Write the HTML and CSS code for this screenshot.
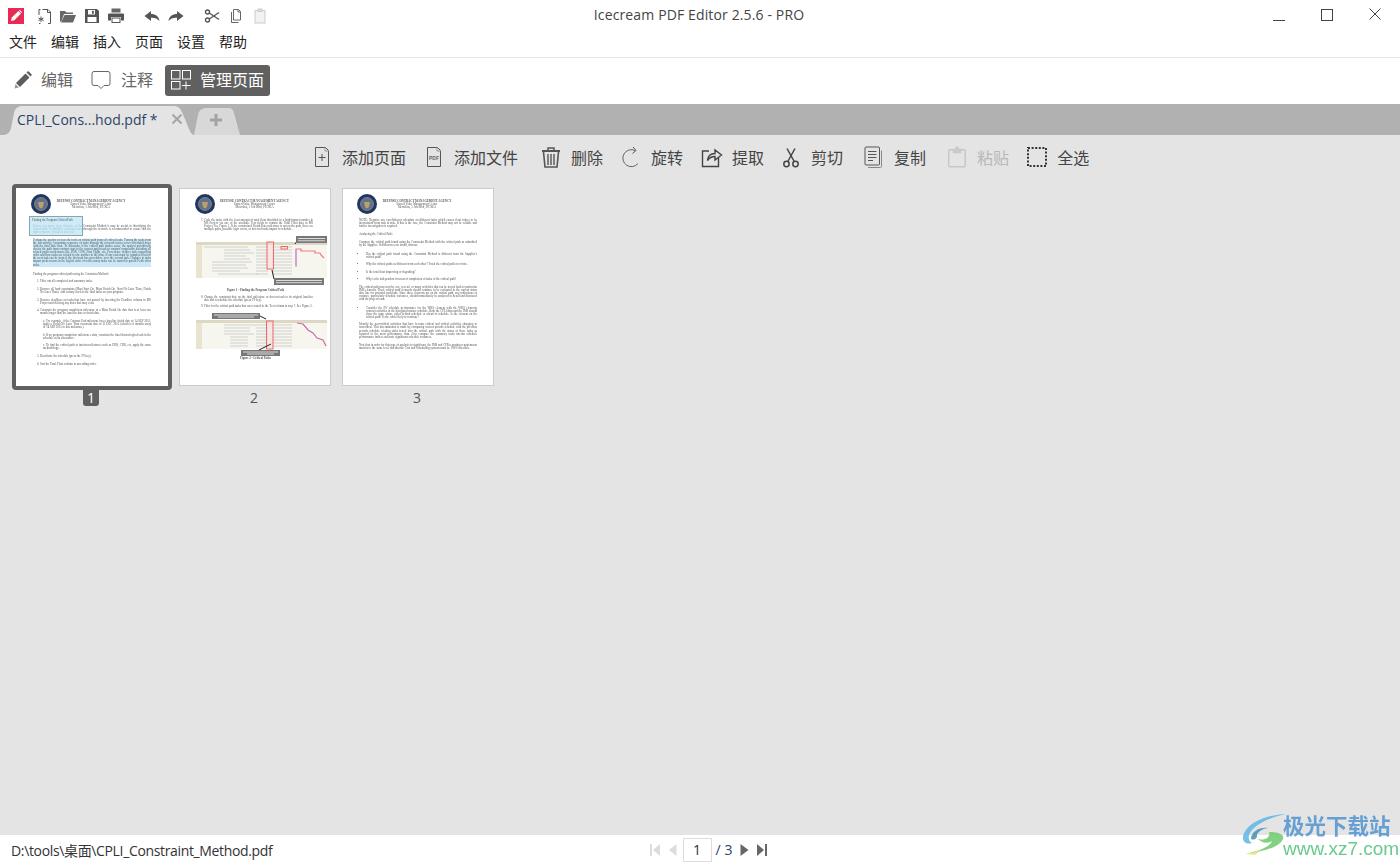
FILE: index.html

```html
<!DOCTYPE html>
<html>
<head>
    <title>Icecream PDF Editor</title>
    <link rel="stylesheet" href="styles.css">
</head>
<body>
    <div class="titlebar">
        <div class="quick">
            <svg class="qi" viewBox="0 0 16 16"><rect width="16" height="16" fill="#e72b52"/><path d="M3 13l.8-3.400 6.600-6.600 2.600 2.600-6.600 6.600z" fill="#fff"/><path d="M11 2.400l.8-.6 2.400 2.400-.6.8z" fill="#fff"/></svg>
            <svg class="qi first" viewBox="0 0 16 16" fill="none" stroke="#555"><path d="M6.500 1.500h5.500l2.500 2.500v11.500h-2.500"/><path d="M3 7V1.500h1.500M3 15.500h1.500"/><path d="M11.500 1.500v3h3"/><path d="M5 8.500v5.500M2.500 10l5 2.500M7.500 10l-5 2.500"/></svg>
            <svg class="qi" viewBox="0 0 16 16"><path d="M0 14V3h5l1.500 1.500H13V6H4L1.500 13z" fill="#666"/><path d="M1 14.500L4.500 7H16l-3 7.500z" fill="#666"/></svg>
            <svg class="qi" viewBox="0 0 16 16"><path d="M1 1h12l2 2v12H1z" fill="#555"/><rect x="4" y="2" width="7" height="4.500" fill="#fff"/><rect x="8" y="2.800" width="1.800" height="3" fill="#555"/><rect x="3.500" y="9" width="9" height="5" fill="#fff"/></svg>
            <svg class="qi" viewBox="0 0 16 16"><rect x="3.500" y="0.500" width="9" height="4" fill="#666"/><path d="M0 6.500q0-1 1-1h14q1 0 1 1v6h-3V9H3v3.500H0z" fill="#555"/><rect x="4" y="10" width="8" height="4.500" fill="none" stroke="#555"/></svg>
            <svg class="qi group" viewBox="0 0 16 16"><path d="M7 3L0.500 8 7 13V9.700c3.500-.3 6.500.8 8.500 3.300C15 8.500 11.500 6 7 6z" fill="#555"/></svg>
            <svg class="qi" viewBox="0 0 16 16"><path d="M9 3l6.500 5L9 13V9.700c-3.500-.3-6.500.8-8.500 3.300C1 8.500 4.500 6 9 6z" fill="#555"/></svg>
            <svg class="qi group" viewBox="0 0 16 16" fill="none" stroke="#555" stroke-width="1.400"><circle cx="3.500" cy="4" r="2"/><circle cx="3.500" cy="12" r="2"/><path d="M5.200 5L15 11.500M5.200 11L15 4.500"/></svg>
            <svg class="qi" viewBox="0 0 16 16" fill="none" stroke="#666"><path d="M5.500 1.500h5l2 2V12h-7zM3.500 4v10.500h7"/><path d="M10 1.500v2.500h2.500"/></svg>
            <svg class="qi" viewBox="0 0 16 16" fill="none" stroke="#ccc"><rect x="3" y="2.500" width="10" height="12.500" fill="#f2f2f2"/><rect x="6" y="1" width="4" height="2.500" fill="#ddd"/></svg>
        </div>
        <div class="app-title">Icecream PDF Editor 2.5.6 - PRO</div>
        <div class="win-btns">
            <div class="win-btn"><svg width="14" height="14" viewBox="0 0 14 14"><path d="M1 13.500h12" stroke="#444"/></svg></div>
            <div class="win-btn"><svg width="14" height="14" viewBox="0 0 14 14"><rect x="1.500" y="2.500" width="11" height="11" fill="none" stroke="#444"/></svg></div>
            <div class="win-btn"><svg width="14" height="14" viewBox="0 0 14 14"><path d="M1.500 1.500l11 11M12.500 1.500l-11 11" stroke="#444"/></svg></div>
        </div>
    </div>

    <div class="menubar">
        <span>文件</span>
        <span>编辑</span>
        <span>插入</span>
        <span>页面</span>
        <span>设置</span>
        <span>帮助</span>
    </div>

    <div class="modes">
        <div class="mode">
            <svg width="18" height="18" viewBox="0 0 18 18"><path d="M2 12l9.500-9.500 4 4L6 16z" fill="#5c5c5c"/><path d="M12.500 1.500l1-1q.7-.4 1.300 0l2.700 2.700q.4.600 0 1.300l-1 1z" fill="#5c5c5c"/><path d="M1.500 13l3.500 3.500-4.500 1z" fill="#999"/></svg>
            <span>编辑</span>
        </div>
        <div class="mode note-mode">
            <svg width="20" height="20" viewBox="0 0 20 20" fill="none" stroke="#666"><path d="M3 1.500h14q2 0 2 2v10q0 2-2 2h-4l-3 3-3-3H3q-2 0-2-2v-10q0-2 2-2z"/></svg>
            <span>注释</span>
        </div>
        <div class="mode active">
            <svg width="20" height="20" viewBox="0 0 20 20" fill="none" stroke="#fff"><rect x="0.500" y="0.500" width="8.500" height="8.500"/><rect x="11.500" y="0.500" width="8" height="8.500"/><rect x="0.500" y="11.500" width="8.500" height="7.500"/><path d="M15 11.500v8M11 15.500h8.500"/></svg>
            <span>管理页面</span>
        </div>
    </div>

    <div class="tabstrip">
        <div class="tab">
            <span class="tab-name">CPLI_Cons...hod.pdf *</span>
            <svg class="tab-x" width="12" height="12" viewBox="0 0 12 12"><path d="M1.500 1.500l9 9M10.500 1.500l-9 9" stroke="#a5a5a5" stroke-width="2"/></svg>
        </div>
        <div class="tab-add">
            <svg width="14" height="14" viewBox="0 0 14 14"><path d="M7 1v12M1 7h12" stroke="#a2a2a2" stroke-width="3"/></svg>
        </div>
    </div>

    <div class="workspace">
        <div class="actions">
            <div class="act">
                <svg class="ai" viewBox="0 0 22 22" fill="none" stroke="#555"><path d="M4.500 1.500h10l3 3v16h-13z"/><path d="M14 1.500v3.500h3.500" stroke="#999"/><path d="M11 8v7M7.500 11.500h7"/></svg>
                <span>添加页面</span>
            </div>
            <div class="act">
                <svg class="ai" viewBox="0 0 22 22" fill="none" stroke="#555"><path d="M4.500 1.500h10l3 3v16h-13z"/><path d="M14 1.500v3.500h3.500" stroke="#999"/><text class="pdf-mark" x="11" y="13.500" text-anchor="middle">PDF</text></svg>
                <span>添加文件</span>
            </div>
            <div class="act">
                <svg class="ai" viewBox="0 0 22 22" fill="none" stroke="#555"><path d="M2 5h18" stroke-width="2"/><path d="M8 4.500V2h6v2.500" stroke-width="1.500"/><path d="M3.500 6l1.500 15h12l1.500-15" stroke-width="1.600"/><path d="M8 8v11M11 8v11M14 8v11" stroke-width="1.400"/></svg>
                <span>删除</span>
            </div>
            <div class="act">
                <svg class="ai" viewBox="0 0 22 22" fill="none" stroke="#666"><path d="M15 4.500A8.500 8.500 0 1 0 18 17.500"/><path d="M13 1l3 3.500-3.500 3" stroke="#555"/></svg>
                <span>旋转</span>
            </div>
            <div class="act">
                <svg class="ai" viewBox="0 0 22 22" fill="none" stroke="#444"><path d="M8 5H1.500v15.500h16V12" stroke-width="1.400"/><path d="M6.500 14.500C7 9.500 10 7.500 14 7.500V4l6.500 5-6.500 5v-3.500c-3 0-5.500 1-7.500 4z" stroke-width="1.400"/></svg>
                <span>提取</span>
            </div>
            <div class="act">
                <svg class="ai" viewBox="0 0 22 22" fill="none" stroke="#444" stroke-width="1.500"><circle cx="6.500" cy="18" r="2.700"/><circle cx="15.500" cy="18" r="2.700"/><path d="M7.800 15.500L15 2.500M14.200 15.500L7 2.500"/></svg>
                <span>剪切</span>
            </div>
            <div class="act">
                <svg class="ai" viewBox="0 0 22 22" fill="none" stroke="#555"><path d="M3 1h12.500q1 0 1 1v16q0 1-1 1H3q-1 0-1-1V2q0-1 1-1z"/><path d="M18.500 4.500v16q0 1-1 1H5" stroke="#888"/><path d="M5 5.500h8.500M5 8.500h8.500M5 11.500h8.500M5 14.500h5"/></svg>
                <span>复制</span>
            </div>
            <div class="act off">
                <svg class="ai" viewBox="0 0 22 22" fill="none" stroke="#c8c8c8" stroke-width="1.500"><rect x="2.700" y="3.700" width="16.500" height="17" rx="1"/><path d="M7.500 3.500h2.500V1.500h2V3.500h2.500v3h-7z" fill="#ccc"/></svg>
                <span>粘贴</span>
            </div>
            <div class="act">
                <svg class="ai" viewBox="0 0 22 22" fill="none" stroke="#333" stroke-width="2" stroke-dasharray="2 1.600"><rect x="2" y="2" width="18" height="18"/></svg>
                <span>全选</span>
            </div>
        </div>

        <div class="thumbs">
            <div class="thumb selected">
                <div class="frame">
                    <div class="page">
                        <div class="doc-head">
                            <svg class="seal" viewBox="0 0 20 20"><circle cx="10" cy="10" r="10" fill="#1f3763"/><circle cx="10" cy="10" r="6.500" fill="#5d7096" stroke="#b5a25a" stroke-width=".6"/><path d="M7 8h6l-1 5-2 1.500L8 13z" fill="#c0a060"/></svg>
                            <div class="doc-org">
                                <b>DEFENSE CONTRACT MANAGEMENT AGENCY</b><br>
                                Earned Value Management Center<br>
                                Metrolina, 1 Job Blvd, PICSEA
                            </div>
                        </div>
                        <div class="note">Finding the Program Critical Path</div>
                        <p class="doc-p pull">Before you many steps illustrate in the Constraint Method it may be useful in identifying the critical path. In addition, a manual trace through the network is recommended to ensure that the right sequence of tasks is selected.</p>
                        <p class="doc-p marked">Perhaps the analyst reviews the tools on critical path from all critical tasks. Tracing the tasks from the last activity, constraints sequence of tasks through the network between two scheduled dates with the final task float. To determine if the critical path makes sense, the analyst periodically checks the path from contract start to the current major task to contract completion including all related project milestones like PDR, CDR, First Flight, etc. Precedence defines task sequencing order and how tasks are related to one another in the plan. If one task must be completed before the next task can be started, the first task has precedence over the second task. Changes in tasks impact predecessors in the logical order of work; many tasks can be started in parallel with other tasks.</p>
                        <p class="doc-p">Finding the program critical path using the Constraint Method:</p>
                        <ol class="doc-list">
                            <li>Filter out all completed and summary tasks.</li>
                            <li>Remove all hard constraints (Must Start On, Must Finish On, Start No Later Than, Finish No Later Than). Add tertiary slack to the final tasks on your program.</li>
                            <li>Remove deadlines on tasks that have not passed by inserting the Deadline column in MS Project and deleting any dates that may exist.</li>
                            <li>Constrain the program completion milestone at a Must Finish On date that is at least one month longer than the baseline date to finish date.</li>
                        </ol>
                        <ul class="doc-sub">
                            <li>a. For example, if the Contract End milestone has a baseline finish date of 14 SEP 2015, apply a Finish No Later Than constraint date of 31 DEC 2015 (which is 6 months away or 14 SEP 2015 in this milestone).</li>
                            <li>b. If no program completion milestone exists, constrain the final chronological task in the schedule as an alternative.</li>
                            <li>c. To find the critical path to interim milestones such as PDR, CDR, etc, apply the same methodology.</li>
                        </ul>
                        <ol class="doc-list" start="5">
                            <li>Reactivate the schedule (press the F9 key).</li>
                            <li>Sort the Total Float column in ascending order.</li>
                        </ol>
                    </div>
                </div>
                <div class="num">1</div>
            </div>

            <div class="thumb">
                <div class="frame">
                    <div class="page">
                        <div class="doc-head">
                            <svg class="seal" viewBox="0 0 20 20"><circle cx="10" cy="10" r="10" fill="#1f3763"/><circle cx="10" cy="10" r="6.500" fill="#5d7096" stroke="#b5a25a" stroke-width=".6"/><path d="M7 8h6l-1 5-2 1.500L8 13z" fill="#c0a060"/></svg>
                            <div class="doc-org">
                                <b>DEFENSE CONTRACT MANAGEMENT AGENCY</b><br>
                                Earned Value Management Center<br>
                                Metrolina, 1 Job Blvd, PICSEA
                            </div>
                        </div>
                        <ol class="doc-list" start="7">
                            <li>Code the tasks with the least amount of total float identified in a high-impact number in MS Project via one of the available Text fields to contain the Total Float data in MS Project. See Figure 1. If the constrained Finish Date milestone is not on the path, there are multiple paths, possible logic errors, or deferred tasks impact to schedule.</li>
                        </ol>
                        <svg class="doc-fig" width="131" height="50" viewBox="0 0 131 50">
                            <rect x="0" y="6" width="131" height="36" fill="#f6f6ee"/>
                            <rect x="0" y="6" width="131" height="3" fill="#ddd8c4"/>
                            <rect x="0" y="9" width="6" height="33" fill="#e8e4d0"/>
                            <path d="M8 11h44M28 14h26M28 17h30M28 20h22M28 23h26M16 26h40M16 29h34M16 32h36M16 35h28M22 38h40M60 11h12M60 14h12M60 17h12M60 20h12M60 23h12M60 26h12M60 29h12M60 32h12M60 35h12M60 38h12M76 11h20M76 14h20M76 17h20M76 20h20M76 23h20M76 26h20M76 29h20M76 32h20M76 35h20M76 38h20" stroke="#cfcfcf"/>
                            <rect x="71" y="6" width="6.500" height="27" fill="#f8d8d8" fill-opacity=".5" stroke="#ee6a6a"/>
                            <rect x="85" y="10.500" width="6.500" height="2.500" fill="none" stroke="#ee6a6a"/>
                            <path d="M100 30V13h5v2h14v2h5l1 2 3 3" fill="none" stroke="#ee7a8a" stroke-width="1.200"/>
                            <path d="M100 14v17" stroke="#a9a0e8"/>
                            <path d="M99 8l3-4" stroke="#222"/>
                            <rect x="100" y="0" width="31" height="7" fill="#777"/>
                            <path d="M102 2.500h27M102 4.800h27" stroke="#ddd"/>
                            <path d="M76 34l2 9" stroke="#222"/>
                            <rect x="78" y="42" width="50" height="7" fill="#777"/>
                            <path d="M80 44.500h46M80 46.700h46" stroke="#ddd"/>
                        </svg>
                        <p class="doc-cap">Figure 1 - Finding the Program Critical Path</p>
                        <ol class="doc-list tight" start="8">
                            <li>Change the constraint date on the final milestone or descent task to its original baseline date and reschedule the schedule (press F9 key).</li>
                            <li>Filter for the critical path tasks that was created in the Text column in step 7. See Figure 2.</li>
                        </ol>
                        <svg class="doc-fig" width="131" height="45" viewBox="0 0 131 45">
                            <rect x="0" y="8" width="131" height="29" fill="#f6f6ee"/>
                            <rect x="0" y="8" width="131" height="3" fill="#ddd8c4"/>
                            <rect x="0" y="11" width="6" height="26" fill="#e8e4d0"/>
                            <path d="M28 13h32M28 16h26M28 19h26M28 22h30M34 25h18M34 28h18M34 31h18M34 34h18M60 13h12M60 16h12M60 19h12M60 22h12M60 25h12M60 28h12M60 31h12M60 34h12M76 13h20M76 16h20M76 19h20M76 22h20M76 25h20M76 28h20M76 31h20M76 34h20" stroke="#cfcfcf"/>
                            <rect x="70.500" y="9" width="6.500" height="28" fill="#f8d8d8" fill-opacity=".5" stroke="#ee6a6a"/>
                            <path d="M101 11l6 1 5 6 5 3 4 5 6 2 3 6" fill="none" stroke="#cc6aa8" stroke-width="1.200"/>
                            <rect x="16" y="1" width="48" height="6" fill="#777"/>
                            <path d="M18 3h44M22 5h36" stroke="#ddd"/>
                            <path d="M64 4l6 3M63 38l12-6" stroke="#222"/>
                            <rect x="45" y="38" width="39" height="6" fill="#777"/>
                            <path d="M47 40h35M51 42h27" stroke="#ddd"/>
                        </svg>
                        <p class="doc-cap under">Figure 2 - Critical Paths</p>
                    </div>
                </div>
                <div class="num">2</div>
            </div>

            <div class="thumb">
                <div class="frame">
                    <div class="page">
                        <div class="doc-head">
                            <svg class="seal" viewBox="0 0 20 20"><circle cx="10" cy="10" r="10" fill="#1f3763"/><circle cx="10" cy="10" r="6.500" fill="#5d7096" stroke="#b5a25a" stroke-width=".6"/><path d="M7 8h6l-1 5-2 1.500L8 13z" fill="#c0a060"/></svg>
                            <div class="doc-org">
                                <b>DEFENSE CONTRACT MANAGEMENT AGENCY</b><br>
                                Earned Value Management Center<br>
                                Metrolina, 1 Job Blvd, PICSEA
                            </div>
                        </div>
                        <p class="doc-p">NOTE: Negative one can different calendars on different tasks which causes float values to be inconsistent from task to task. If this is the case, the Constraint Method may not be reliable and further investigation is required.</p>
                        <p class="doc-p">Analyzing the Critical Path:</p>
                        <p class="doc-p">Compare the critical path found using the Constraint Method with the critical path as submitted by the Supplier. If differences are found, discuss:</p>
                        <ul class="doc-bullets">
                            <li>Has the critical path found using the Constraint Method is different from the Supplier's critical path?</li>
                            <li>Why the critical paths as different from each other? Track the critical path over time.</li>
                            <li>Is the total float improving or degrading?</li>
                            <li>Why is the independent forecast of completion of tasks of the critical path?</li>
                        </ul>
                        <p class="doc-p">The critical path may involve one, several, or many activities that can be traced back to particular IMS elements. These critical path elements should continue to be evaluated in the current status date line for potential problems. Since these elements are on the critical path, any indications of variance, particularly schedule variances, should immediately be analyzed in detail and discussed with the project team.</p>
                        <ul class="doc-bullets">
                            <li>Consider the EV schedule performance for the WBS element with the WBS elements contract activities in the Integrated master schedule. Both the CPLI data and the IMS should show the same status, either behind schedule or ahead of schedule. Is the element on the critical path? Is the work likely to continue?</li>
                        </ul>
                        <p class="doc-p">Identify the near-critical activities that have become critical and critical activities changing to noncritical. This determination is made by comparing current periods schedule with the previous periods schedule relating tasks tested into the critical path with the status of these tasks as reported in the most performance data. Also compare the summary tasks interim schedule performance indices and note significant schedule variances.</p>
                        <p class="doc-p">Note that in order for this type of analysis to significant, the IMS and CPR reporting requirements must have the same level and that the Cost and Scheduling systems must be 100% traceable.</p>
                    </div>
                </div>
                <div class="num">3</div>
            </div>
        </div>
    </div>

    <div class="statusbar">
        <div class="path">D:\tools\桌面\CPLI_Constraint_Method.pdf</div>
        <div class="pager">
            <svg width="10" height="14" viewBox="0 0 10 14"><path d="M0 1h2v12H0zM10 1v12L3 7z" fill="#dcdcdc"/></svg>
            <svg class="prev" width="9" height="14" viewBox="0 0 9 14"><path d="M8.500 1v12L1 7z" fill="#dcdcdc"/></svg>
            <div class="page-box">1</div>
            <span class="page-total">/ 3</span>
            <svg class="next" width="9" height="14" viewBox="0 0 9 14"><path d="M0.500 1v12L8.500 7z" fill="#666"/></svg>
            <svg class="last" width="10" height="14" viewBox="0 0 10 14"><path d="M0 1v12l7-6zM8 1h2v12H8z" fill="#666"/></svg>
        </div>
    </div>

    <div class="watermark">
        <svg class="wm-logo" width="46" height="44" viewBox="0 0 46 44">
            <path d="M45 2C25 3 6 10 2 24c-1 6 4 9 9 7-5-3-4-9 1-14C20 9 32 5 45 2z" fill="#5fb6e6"/>
            <path d="M10 27c0-7 8-12 17-11-7 1-12 5-11 9-2 3-4 3-6 2z" fill="#4a8fb0"/>
            <path d="M16 26c6 4 14 0 12-6 8 0 16 2 14 7-4 9-22 13-37 15 12-3 24-7 26-13-4 3-11 2-15-3z" fill="#6ecb6e"/>
            <path d="M5 42c5-1 10-2 15-4l-6 5z" fill="#e8e27a"/>
        </svg>
        <div class="wm-text">
            <div class="wm-cn">极光下载站</div>
            <div class="wm-url">www.xz7.com</div>
        </div>
    </div>
</body>
</html>
```

FILE: styles.css

```css
* {
    box-sizing: border-box;
}
html, body {
    height: 100%;
}
body {
    margin: 0;
    height: 864px;
    overflow: hidden;
    display: flex;
    flex-direction: column;
    position: relative;
    background: #fff;
    color: #333;
    font-family: "Open Sans", "Noto Sans CJK SC", sans-serif;
    font-size: 14px;
}

/* title bar */
.titlebar {
    height: 30px;
    flex: none;
    display: grid;
    grid-template-columns: 1fr auto 1fr;
    align-items: center;
}
.quick {
    display: flex;
    align-items: center;
    gap: 8px;
    padding: 2px 0 0 8px;
}
.qi {
    width: 16px;
    height: 16px;
}
.qi.first {
    margin-left: 4px;
}
.qi.group {
    margin-left: 12px;
}
.app-title {
    font-size: 14px;
    letter-spacing: .13px;
    color: #444;
    margin-left: -2px;
    padding-bottom: 2px;
}
.win-btns {
    display: flex;
    justify-content: flex-end;
    padding-right: 1px;
}
.win-btn {
    width: 48px;
    height: 30px;
    padding-bottom: 2px;
    display: flex;
    align-items: center;
    justify-content: center;
}

.menubar {
    height: 28px;
    flex: none;
    display: flex;
    gap: 14px;
    padding: 0 0 6px 9px;
    align-items: center;
    border-bottom: 1px solid #e4e4e4;
    font-family: "Noto Sans CJK SC", sans-serif;
    color: #222;
}

/* mode switcher */
.modes {
    height: 46px;
    flex: none;
    display: flex;
    align-items: center;
    padding: 0 0 2px 14px;
    color: #666;
    font-family: "Noto Sans CJK SC", sans-serif;
    font-size: 16px;
}
.mode {
    display: flex;
    align-items: center;
    gap: 9px;
    margin-right: 18px;
}
.mode span {
    margin-top: -2px;
}
.note-mode {
    gap: 10px;
}
.mode.active {
    margin-left: -6px;
    width: 105px;
    height: 31px;
    padding-left: 6px;
    background: #606060;
    color: #fff;
    border-radius: 3px;
}

/* tabs */
.tabstrip {
    height: 31px;
    flex: none;
    display: flex;
    align-items: flex-end;
    background: #b1b1b1;
    padding-left: 3px;
}
.tab {
    width: 192px;
    height: 29px;
    display: flex;
    align-items: center;
    padding: 0 12px 3px 14px;
    background: #e4e4e4;
    clip-path: path("M0 29 C5 29 7 26 8 22 L11 7 C12 2 15 0 20 0 L170 0 C175 0 177 2 179 6 L186 23 C188 27 189 29 192 29 Z");
    color: #2d4468;
    font-size: 14px;
}
.tab-name {
    flex: 1;
}
.tab-add {
    width: 46px;
    height: 28px;
    margin-left: -1px;
    padding: 0 3px 2px 0;
    display: flex;
    align-items: center;
    justify-content: center;
    background: #d8d8d8;
    clip-path: path("M0 28 L4 8 C5 3 8 1 13 1 L34 1 C38 1 39 3 40 6 L46 28 Z");
}

/* page manager */
.workspace {
    flex: 1;
    background: #e4e4e4;
}
.actions {
    height: 49px;
    display: flex;
    align-items: center;
    gap: 18px;
    padding: 0 0 6px 311px;
    font-family: "Noto Sans CJK SC", sans-serif;
    font-size: 16px;
    color: #444;
}
.act {
    display: flex;
    align-items: center;
    gap: 9px;
}
.act:nth-child(2) {
    margin-left: -1px;
}
.act:nth-child(3) {
    margin-left: 4px;
}
.act:nth-child(4) {
    margin-left: -1px;
}
.act:nth-child(6) {
    margin-left: -2px;
}
.act:nth-child(7),
.act:nth-child(8) {
    margin-left: 2px;
}
.act:nth-child(9) {
    margin-left: -1px;
}
.act.off {
    color: #b8b8b8;
}
.ai {
    width: 22px;
    height: 22px;
}
.pdf-mark {
    font-family: "Liberation Sans", sans-serif;
    font-size: 5px;
    font-weight: bold;
    fill: #666;
    stroke: none;
}

.thumbs {
    display: flex;
    gap: 3px;
    padding-left: 12px;
}
.thumb {
    width: 160px;
    display: flex;
    flex-direction: column;
    align-items: center;
}
.frame {
    width: 160px;
    height: 206px;
    padding: 4px;
    border-radius: 4px;
}
.selected .frame {
    background: #606060;
}
.page {
    height: 198px;
    padding: 6px 17px 0;
    background: #fff;
    overflow: hidden;
    position: relative;
    filter: blur(.3px);
    color: #555;
    font-family: "Liberation Serif", serif;
    font-size: 3px;
    line-height: 3.1px;
}
.thumb:not(.selected) .page {
    outline: 1px solid #ccc;
    outline-offset: -1px;
}
.doc-head {
    display: grid;
    grid-template-columns: 1fr auto 1fr;
    margin: 0 0 5px -2px;
    min-height: 20px;
    align-items: start;
}
.seal {
    width: 20px;
    height: 20px;
}
.doc-org {
    grid-column: 2;
    padding-top: 6px;
    text-align: center;
}
.doc-p {
    margin: 0 0 4.500px;
    text-align: justify;
}
.thumb:nth-child(3) .doc-p {
    margin-bottom: 5px;
}
.note {
    position: absolute;
    left: 13px;
    top: 28px;
    width: 54px;
    height: 20px;
    padding: 2px;
    background: rgba(190, 228, 245, .75);
    border: 1px solid #8aa4ad;
}
.pull {
    margin-top: 11px;
}
.marked {
    background: #c9e9f8;
    margin-bottom: 6px;
}
.doc-list,
.doc-sub,
.doc-bullets {
    margin: 0;
    padding: 0 0 0 7px;
    text-align: justify;
}
.doc-list li,
.doc-sub li,
.doc-bullets li {
    margin-bottom: 4.500px;
}
.doc-sub {
    list-style: none;
    padding-left: 10px;
}
.doc-fig {
    display: block;
    margin: 4px 0 0 0;
}
.thumb:nth-child(2) .page {
    padding-left: 18px;
}
.thumb:nth-child(2) .doc-list {
    padding-right: 1px;
}
.thumb:nth-child(2) .doc-fig {
    margin-left: -1px;
}
.doc-cap {
    margin: 3px 0 4px;
    text-align: center;
    font-weight: bold;
}
.doc-cap.under {
    margin: 0;
}
.tight li {
    margin-bottom: 3px;
}

.num {
    width: 16px;
    height: 16px;
    margin-left: -2px;
    line-height: 15px;
    text-align: center;
    color: #555;
}
.selected .num {
    background: #606060;
    color: #fff;
    border-radius: 0 0 3px 3px;
}

/* status bar */
.statusbar {
    height: 29px;
    flex: none;
    display: grid;
    grid-template-columns: 1fr auto 1fr;
    align-items: center;
    padding-left: 11px;
    background: #fff;
}
.path {
    color: #333;
    letter-spacing: -.35px;
}
.pager {
    display: flex;
    align-items: center;
    padding-left: 6px;
}
.prev {
    margin-left: 8px;
}
.page-box {
    width: 29px;
    height: 24px;
    margin-left: 6px;
    border: 1px solid #ddd;
    text-align: center;
    line-height: 22px;
}
.page-total {
    margin-left: 4px;
    color: #2d4468;
}
.next {
    margin-left: 8px;
}
.last {
    margin-left: 8px;
}

.watermark {
    position: absolute;
    left: 1241px;
    top: 812px;
    display: flex;
    opacity: .85;
}
.wm-text {
    margin-left: -4px;
}
.wm-cn {
    font-family: "Noto Sans CJK SC", sans-serif;
    font-size: 21.500px;
    font-weight: 700;
    line-height: 26px;
    color: #4f93d1;
}
.wm-url {
    font-family: "Liberation Sans", sans-serif;
    font-size: 19px;
    line-height: 21px;
    color: #4cc27a;
}
```
